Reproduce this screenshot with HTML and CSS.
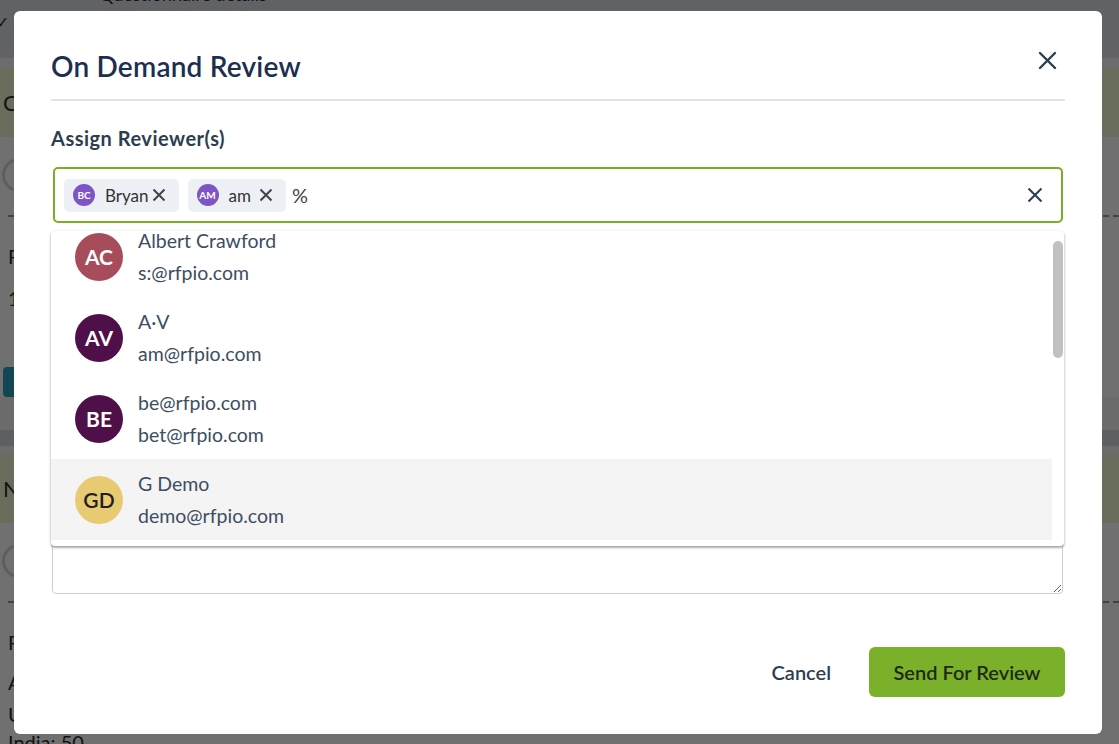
FILE: index.html
```html
<!DOCTYPE html>
<html lang="en">
<head>
  <meta charset="UTF-8">
  <title>On Demand Review</title>
  <link rel="stylesheet" href="styles.css">
</head>
<body>
  <div class="page">
    <div class="topbar">
      <span class="check">&#10003;</span>
      <span class="topbar-title">Questionnaire details</span>
    </div>
    <div class="card">
      <div class="card-head">Compliance</div>
      <div class="card-body">
        <div class="owner-row"><span class="owner-ring"></span></div>
        <div class="dash"></div>
        <p class="line line-first">Requirement</p>
        <p class="line">1 question</p>
        <div class="teal-btn">Open</div>
      </div>
    </div>
    <div class="card-bar"></div>
    <div class="card">
      <div class="card-head">Network</div>
      <div class="card-body">
        <div class="owner-row"><span class="owner-ring"></span></div>
        <div class="dash"></div>
        <p class="line line-first">Regions</p>
        <p class="line line-mid">APAC</p>
        <p class="line line-short">US: 120</p>
        <p class="line line-tight">India: 50</p>
      </div>
    </div>
  </div>

  <div class="overlay"></div>

  <div class="modal">
    <div class="modal-header">
      <h2 class="modal-title">On Demand Review</h2>
      <button class="icon-btn close-btn" aria-label="Close">
        <svg width="19" height="19" viewBox="0 0 19 19"><path d="M2 2 L17 17 M17 2 L2 17" stroke="#2d3e50" stroke-width="2.4" stroke-linecap="round"/></svg>
      </button>
    </div>

    <label class="field-label">Assign Reviewer(s)</label>
    <div class="reviewer-field">
      <div class="tag-input">
        <span class="chip">
          <span class="chip-avatar">BC</span>
          <span class="chip-name">Bryan</span>
          <svg class="chip-x" width="16" height="16" viewBox="0 0 16 16"><path d="M2.5 2.5 L13.5 13.5 M13.5 2.5 L2.5 13.5" stroke="#444" stroke-width="2"/></svg>
        </span>
        <span class="chip">
          <span class="chip-avatar">AM</span>
          <span class="chip-name chip-name-short">am</span>
          <svg class="chip-x" width="16" height="16" viewBox="0 0 16 16"><path d="M2.5 2.5 L13.5 13.5 M13.5 2.5 L2.5 13.5" stroke="#444" stroke-width="2"/></svg>
        </span>
        <span class="query">%</span>
        <svg class="clear-x" width="16" height="16" viewBox="0 0 16 16"><path d="M1.5 1.5 L14.5 14.5 M14.5 1.5 L1.5 14.5" stroke="#2d3e50" stroke-width="2"/></svg>
      </div>

      <div class="dropdown">
        <ul class="options">
          <li class="option">
            <span class="avatar avatar-red">AC</span>
            <span class="option-text"><span>Albert Crawford</span><span>s:@rfpio.com</span></span>
          </li>
          <li class="option">
            <span class="avatar avatar-plum">AV</span>
            <span class="option-text"><span>A&middot;V</span><span>am@rfpio.com</span></span>
          </li>
          <li class="option">
            <span class="avatar avatar-plum">BE</span>
            <span class="option-text"><span>be@rfpio.com</span><span>bet@rfpio.com</span></span>
          </li>
          <li class="option option-active">
            <span class="avatar avatar-gold">GD</span>
            <span class="option-text"><span>G Demo</span><span>demo@rfpio.com</span></span>
          </li>
          <li class="option">
            <span class="avatar avatar-red">JK</span>
            <span class="option-text"><span>John K</span><span>john@rfpio.com</span></span>
          </li>
        </ul>
        <div class="scrollbar"><div class="thumb"></div></div>
      </div>
    </div>

    <label class="field-label comments-label">Comments</label>
    <textarea class="comments"></textarea>

    <div class="modal-footer">
      <button class="btn-cancel">Cancel</button>
      <button class="btn-send">Send For Review</button>
    </div>
  </div>
</body>
</html>
```

FILE: styles.css
```css
* {
  box-sizing: border-box;
}

body {
  margin: 0;
  font-family: Lato, "Liberation Sans", sans-serif;
  background-color: #f5f5f5;
  overflow: hidden;
  height: 744px;
}

/* page behind the dialog */
.page {
  color: #2b2b2b;
}
.topbar {
  height: 58px;
  background-color: #dde0e8;
  margin-bottom: 10px;
  display: flex;
  align-items: flex-start;
  gap: 90px;
  font-size: 16px;
}
.check {
  margin: 12px 0 0 -4px;
  font-size: 16px;
}
.topbar-title {
  margin-top: -17px;
  font-size: 18px;
}

.card {
  background-color: #fff;
}
.card-head {
  height: 69px;
  line-height: 69px;
  background-color: #f1f9d2;
  padding-left: 3px;
  font-size: 22px;
}
.card-body {
  padding: 0 0 0 8px;
}
.owner-row {
  height: 78px;
  padding-top: 21px;
}
.owner-ring {
  display: block;
  width: 34px;
  height: 34px;
  margin-left: -6px;
  border: 3px solid #d7d7d7;
  border-radius: 50%;
}
.dash {
  border-top: 2px dashed #9a9a9a;
}
.line {
  margin: 0;
  font-size: 20px;
  line-height: 42px;
}
.line-first {
  margin-top: 18px;
}
.line-mid {
  line-height: 38px;
}
.line-short {
  line-height: 26px;
}
.line-tight {
  line-height: 30px;
}
.teal-btn {
  width: 60px;
  height: 30px;
  margin: 48px 0 33px -5px;
  background-color: #2aa0c0;
  border-radius: 4px;
  color: #2aa0c0;
}
.card-bar {
  height: 16px;
  background-color: #d6d9e1;
  margin-bottom: 8px;
}

.overlay {
  position: fixed;
  inset: 0;
  background-color: rgba(0, 0, 0, 0.56);
}

/* dialog */
.modal {
  position: absolute;
  top: 11px;
  left: 14px;
  width: 1088px;
  height: 723px;
  background-color: #fff;
  border-radius: 6px;
  padding: 0 37px 37px;
  display: flex;
  flex-direction: column;
  color: #2d3e50;
}
.modal-header {
  display: flex;
  justify-content: space-between;
  padding-top: 35px;
  padding-bottom: 13px;
  border-bottom: 2px solid #e3e3e3;
}
.modal-title {
  margin: 0;
  font-size: 28px;
  line-height: 40px;
  font-weight: 600;
  color: #1c2f4f;
  letter-spacing: 0.2px;
}
.icon-btn {
  border: none;
  background: none;
  padding: 0;
  cursor: pointer;
}
.close-btn {
  width: 19px;
  height: 19px;
  margin: 5px 8px 0 0;
}

.field-label {
  display: block;
  margin-top: 24px;
  font-size: 20px;
  line-height: 26px;
  font-weight: 700;
  letter-spacing: 0.5px;
  color: #2d3e50;
}

.reviewer-field {
  position: relative;
  margin-top: 16px;
}
.tag-input {
  height: 56px;
  margin: 0 2px;
  border: 2px solid #7aae25;
  border-radius: 5px;
  padding: 0 18px 0 9px;
  display: flex;
  align-items: center;
  gap: 9px;
}
.chip {
  height: 33px;
  display: flex;
  align-items: center;
  padding: 0 12px 0 9px;
  background-color: #edf0f4;
  border-radius: 5px;
  font-size: 17px;
  color: #333;
}
.chip-avatar {
  width: 22px;
  height: 22px;
  border-radius: 50%;
  background-color: #7e55c4;
  color: #fff;
  font-size: 10px;
  font-weight: 700;
  display: flex;
  align-items: center;
  justify-content: center;
  margin-right: 10px;
}
.chip-name {
  margin-right: 2px;
}
.chip-name-short {
  margin-right: 7px;
}
.query {
  font-size: 20px;
  color: #444;
  margin-left: -3px;
}
.clear-x {
  margin-left: auto;
}

.dropdown {
  position: absolute;
  top: calc(100% + 8px);
  left: 0;
  right: 1px;
  height: 315px;
  background-color: #fff;
  border-radius: 4px;
  box-shadow: 0 1px 3px rgba(0, 0, 0, 0.25), 0 2px 2px rgba(0, 0, 0, 0.2);
  overflow: hidden;
  display: flex;
  z-index: 2;
}
.options {
  flex: 1;
  list-style: none;
  margin: -15px 0 0;
  padding: 0;
}
.option {
  height: 81px;
  display: flex;
  align-items: center;
  padding-left: 24px;
  gap: 15px;
}
.option-active {
  background-color: #f4f4f4;
}
.avatar {
  width: 48px;
  height: 48px;
  border-radius: 50%;
  display: flex;
  align-items: center;
  justify-content: center;
  font-size: 21px;
  font-weight: 700;
  color: #fff;
  flex-shrink: 0;
}
.avatar-red {
  background-color: #a74c5b;
}
.avatar-plum {
  background-color: #4f0f48;
}
.avatar-gold {
  background-color: #e8ca72;
  color: #1f1f1f;
  font-weight: 600;
}
.option-text {
  display: flex;
  flex-direction: column;
  font-size: 19.5px;
  line-height: 32px;
  color: #3d4e62;
}
.scrollbar {
  width: 12px;
  padding: 10px 1px 0 1px;
}
.thumb {
  height: 117px;
  background-color: #c1c1c1;
  border-radius: 5px;
}

.comments-label {
  margin-top: 24px;
}
.comments {
  display: block;
  margin: 10px 2px 0 1px;
  height: 311px;
  border: 1px solid #cfcfcf;
  border-radius: 4px;
  resize: vertical;
  font-family: inherit;
}

.modal-footer {
  margin-top: auto;
  display: flex;
  justify-content: flex-end;
  align-items: center;
  gap: 19px;
}
.btn-cancel {
  border: none;
  background: none;
  padding: 0 19px;
  font-family: inherit;
  font-size: 20px;
  font-weight: 600;
  color: #2d3e50;
  cursor: pointer;
}
.btn-send {
  width: 196px;
  height: 50px;
  border: none;
  border-radius: 6px;
  background-color: #7bb02a;
  font-family: inherit;
  font-size: 20px;
  font-weight: 600;
  color: #1d2a16;
  cursor: pointer;
}
```
